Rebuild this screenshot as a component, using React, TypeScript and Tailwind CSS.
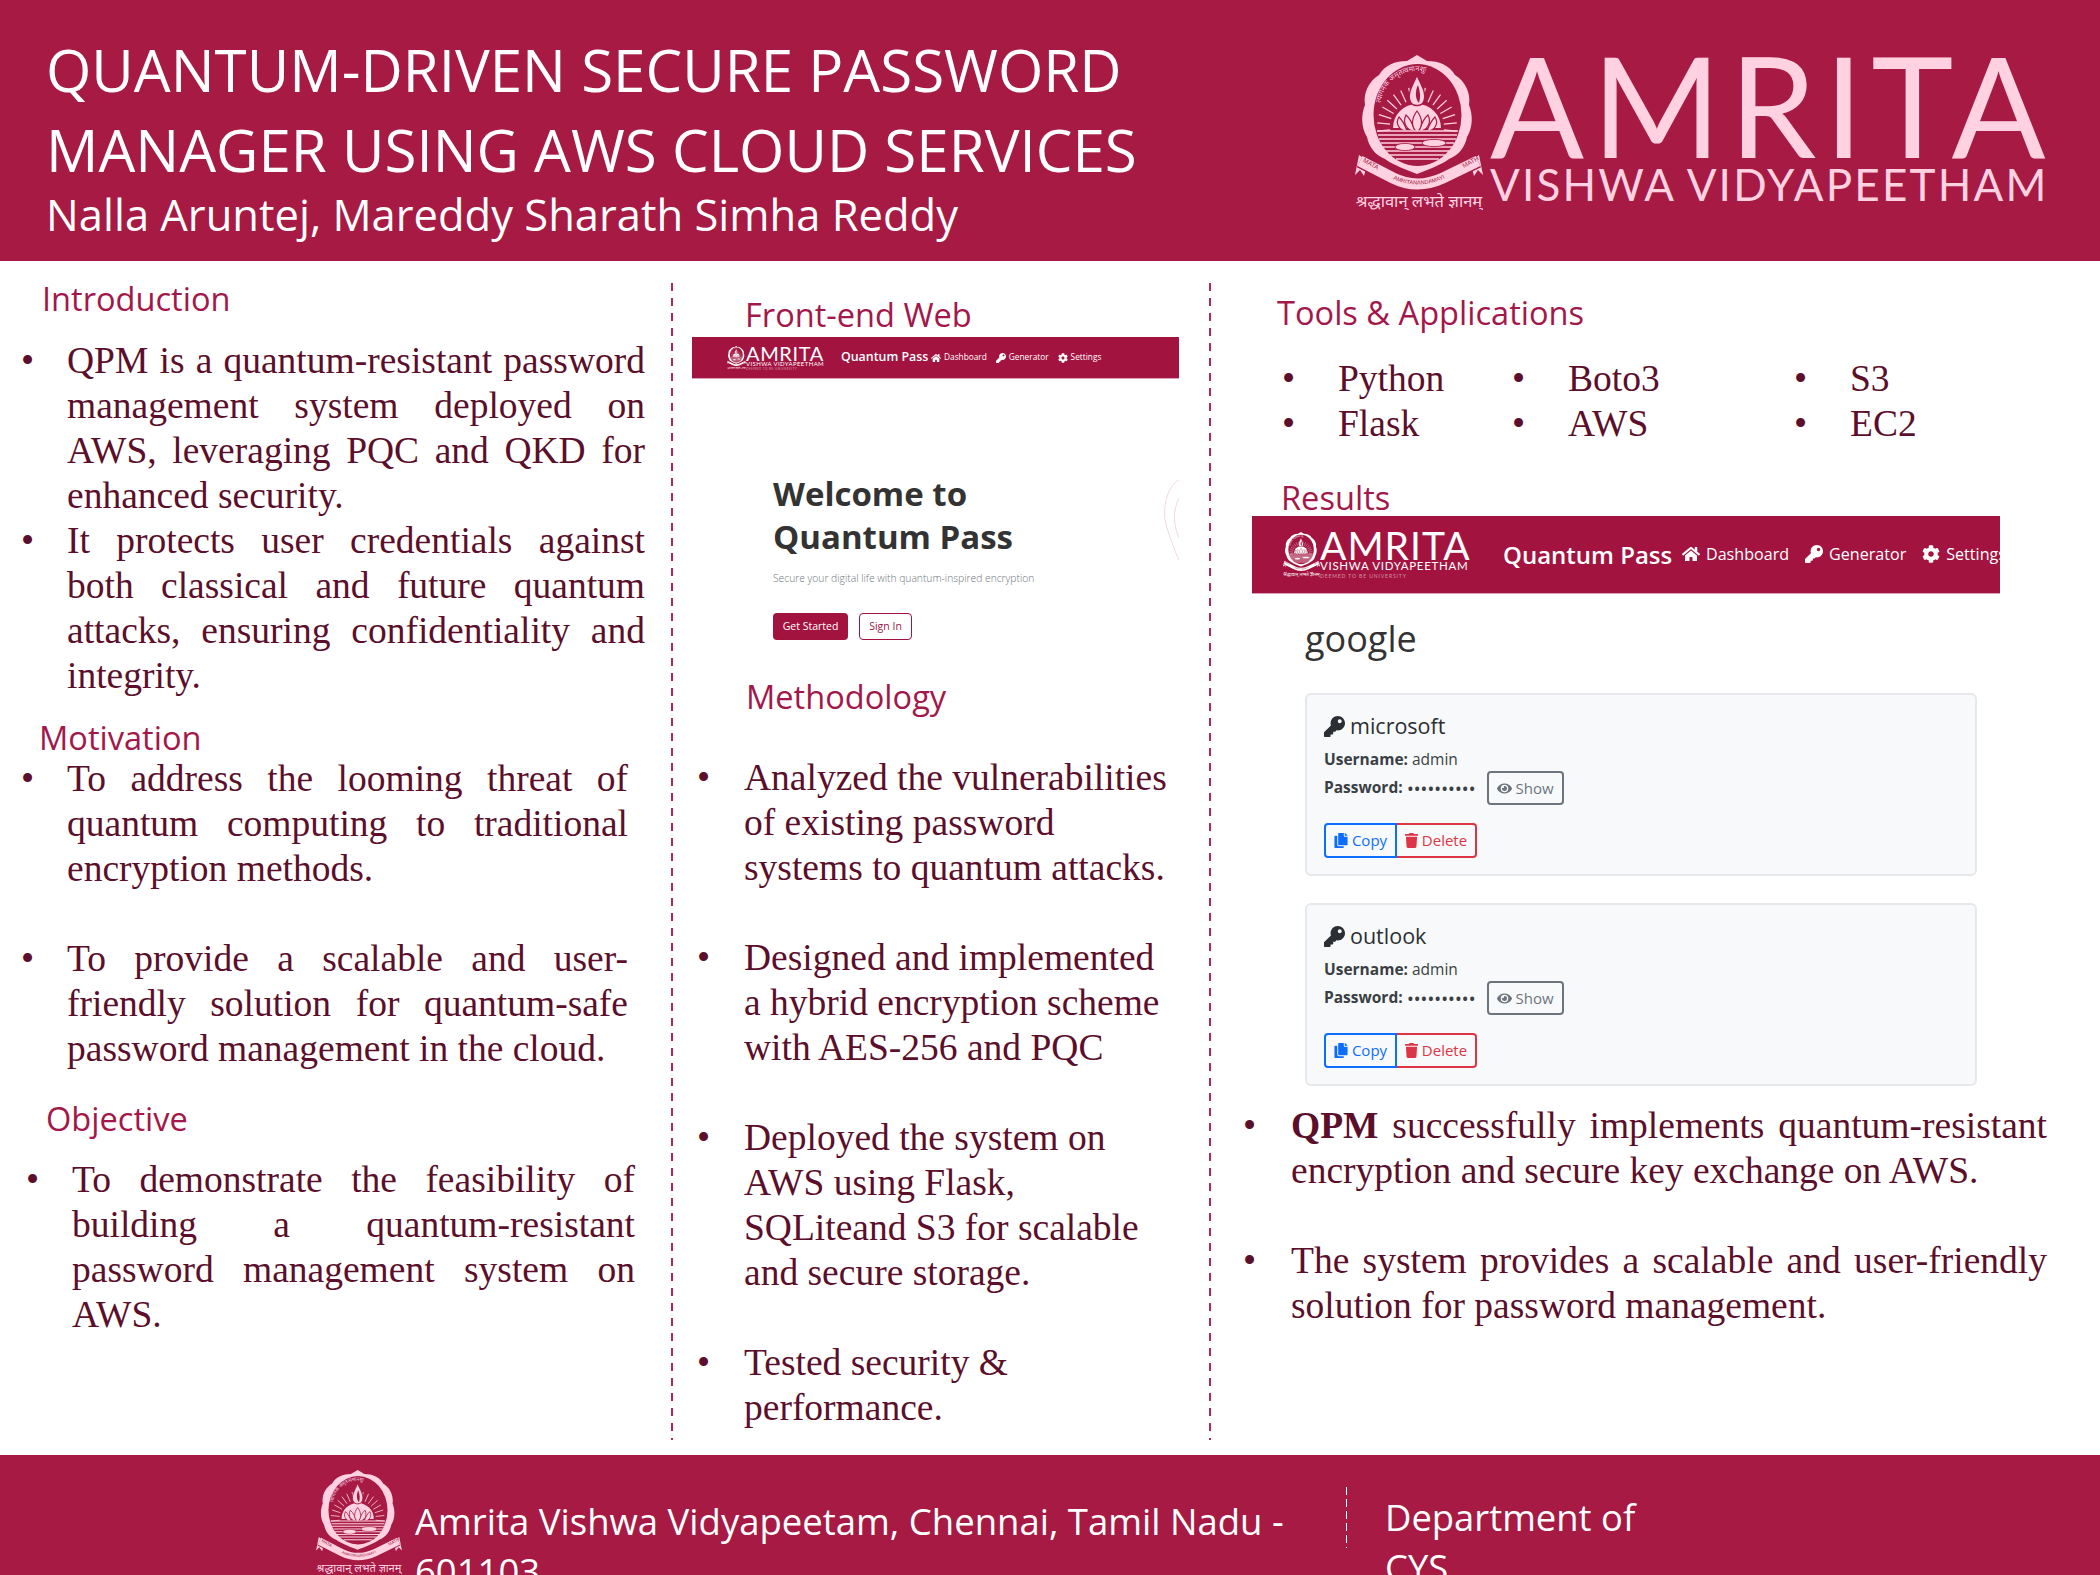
import React from "react";
import { FaHome, FaKey, FaCog, FaEye, FaCopy, FaTrash } from "react-icons/fa";

const sans = "font-['Open_Sans','Noto_Sans',sans-serif]";

function Emblem({ color = "#FFD1E1", bg = "#A61A44", className = "" }: { color?: string; bg?: string; className?: string }) {
  const rays = [-72, -60, -48, -36, -24, -12, 12, 24, 36, 48, 60, 72, -84, 84, -96, 96];
  return (
    <svg viewBox="0 0 128 155" className={className}>
      <path
        fill={color}
        d="M62 0 L72 6 C84 6 94 10 100 20 C110 26 116 38 114 50 C118 60 118 72 112 82 C110 92 104 100 94 104 C86 110 74 114 62 119 C50 114 38 110 30 104 C20 100 14 92 12 82 C6 72 6 60 10 50 C8 38 14 26 24 20 C30 10 40 6 52 6 Z"
      />
      <ellipse cx="62.5" cy="60" rx="44" ry="51" fill={bg} />
      <path id="mottoArc" d="M25 54 C26 32 42 16 62 16 C82 16 99 32 100 54" fill="none" />
      <text fontSize="7.4" fill={color} fontFamily="'Noto Sans','Noto Sans Devanagari',sans-serif">
        <textPath href="#mottoArc" startOffset="6">त्यागेनैके अमृतत्वमानशुः</textPath>
      </text>
      {rays.map((a) => {
        const r = (a * Math.PI) / 180;
        return (
          <line
            key={a}
            x1={62 + 27 * Math.sin(r)}
            y1={72 - 27 * Math.cos(r)}
            x2={62 + 40 * Math.sin(r)}
            y2={72 - 40 * Math.cos(r)}
            stroke={color}
            strokeWidth="1.2"
          />
        );
      })}
      <path d="M38 73 A24 24 0 0 1 86 73 Z" fill={color} />
      <path d="M62 20 C58 30 52 38 55 46 C57 52 67 52 69 46 C72 38 66 30 62 20 Z" fill={color} stroke={bg} strokeWidth="1.4" />
      <path d="M63 30 C60 36 60 44 64 48 C66 42 65 36 63 30 Z" fill={bg} />
      <g fill={color} stroke={bg} strokeWidth="1.2">
        <path d="M44 62 C40 68 44 76 52 76 C50 70 48 66 44 62 Z" />
        <path d="M80 62 C84 68 80 76 72 76 C74 70 76 66 80 62 Z" />
        <path d="M51 60 C47 68 52 76 60 76 C58 70 56 64 51 60 Z" />
        <path d="M73 60 C77 68 72 76 64 76 C66 70 68 64 73 60 Z" />
        <path d="M62 56 C56 64 56 72 62 77 C68 72 68 64 62 56 Z" />
      </g>
      <g stroke={color} strokeWidth="1.5">
        <line x1="22" y1="76" x2="103" y2="76" />
        <line x1="23" y1="80" x2="102" y2="80" />
        <line x1="24" y1="84" x2="101" y2="84" />
        <line x1="26" y1="88" x2="99" y2="88" />
        <line x1="28" y1="92" x2="97" y2="92" />
        <line x1="31" y1="96" x2="94" y2="96" />
        <line x1="35" y1="100" x2="90" y2="100" />
        <line x1="41" y1="104" x2="84" y2="104" />
      </g>
      <ellipse cx="50" cy="92" rx="10" ry="3.6" fill={color} stroke={bg} strokeWidth="0.8" />
      <ellipse cx="79" cy="88" rx="12" ry="3.6" fill={color} stroke={bg} strokeWidth="0.8" />
      <path d="M4 100 L0 120 L5 115 L9 121 L13 106 Z" fill={color} />
      <path d="M124 100 L128 120 L123 115 L119 121 L115 106 Z" fill={color} />
      <path d="M5 106 L38 123 Q62 135 88 123 L123 106" fill="none" stroke={bg} strokeWidth="14" />
      <path d="M5 106 L38 123 Q62 135 88 123 L123 106" fill="none" stroke={color} strokeWidth="11" />
      <path id="ribbonText" d="M5 105 L38 124 Q62 135 88 124 L124 105" fill="none" />
      <text fontSize="6.4" fill={bg} fontFamily="'Liberation Sans',sans-serif">
        <textPath href="#ribbonText" startOffset="3">MATA</textPath>
      </text>
      <text fontSize="5.6" fill={bg} fontFamily="'Liberation Sans',sans-serif">
        <textPath href="#ribbonText" startOffset="38">AMRITANANDAMAYI</textPath>
      </text>
      <text fontSize="6.4" fill={bg} fontFamily="'Liberation Sans',sans-serif">
        <textPath href="#ribbonText" startOffset="113">MATH</textPath>
      </text>
      <text x="64" y="152" fontSize="16.5" textAnchor="middle" fill={color} fontFamily="'Noto Sans','Noto Sans Devanagari',sans-serif">
        श्रद्धावान् लभते ज्ञानम्
      </text>
    </svg>
  );
}

const navStyles = {
  big: {
    bar: "h-[78px] w-[748px] pl-[31px]",
    emblem: "w-[37px] h-[45px]",
    logoWrap: "w-[186px] h-[48px]",
    name: "text-[39px] leading-[30px] tracking-[1px] pt-[1px]",
    sub: "text-[11.5px] leading-[11px] tracking-[0.7px]",
    deemed: "text-[5px] leading-[7px] mt-[2px] tracking-[0.9px]",
    brand: "ml-[34px] text-[24px] w-[179px]",
    links: "gap-[16px]",
    link: "text-[16.1px] gap-[6px]",
    icon: "w-[18px] h-[18px]",
  },
  small: {
    bar: "h-[42px] w-[487px] pl-[35px]",
    emblem: "w-[19px] h-[23px]",
    logoWrap: "w-[96px] h-[26px]",
    name: "text-[20px] leading-[16px] tracking-[0.6px]",
    sub: "text-[6px] leading-[6px] tracking-[0.4px]",
    deemed: "text-[3px] leading-[4px] tracking-[0.5px]",
    brand: "ml-[18px] text-[12.4px] w-[90px]",
    links: "gap-[9px]",
    link: "text-[8.3px] gap-[3px]",
    icon: "w-[10px] h-[10px]",
  },
};

function Navbar({ size }: { size: "big" | "small" }) {
  const s = navStyles[size];
  return (
    <div className={`flex items-center overflow-hidden whitespace-nowrap bg-[#A3133F] text-white border-b border-[#d9a3b6] ${sans} ${s.bar}`}>
      <div className={`flex shrink-0 items-center ${s.logoWrap}`}>
        <Emblem color="#ffffff" bg="#A3133F" className={`shrink-0 ${s.emblem}`} />
        <div className="font-['Lato',sans-serif]">
          <div className={s.name}>AMRITA</div>
          <div className={s.sub}>VISHWA VIDYAPEETHAM</div>
          <div className={`opacity-50 ${s.deemed}`}>DEEMED TO BE UNIVERSITY</div>
        </div>
      </div>
      <div className={`shrink-0 font-semibold ${s.brand}`}>Quantum Pass</div>
      <div className={`flex items-center ${s.links}`}>
        <span className={`flex items-center ${s.link}`}><FaHome className={s.icon} />Dashboard</span>
        <span className={`flex items-center ${s.link}`}><FaKey className={s.icon} />Generator</span>
        <span className={`flex items-center ${s.link}`}><FaCog className={s.icon} />Settings</span>
      </div>
    </div>
  );
}

function Heading({ className = "", children }: { className?: string; children: React.ReactNode }) {
  return <h2 className={`text-[32.6px] leading-[40px] text-[#A3184A] ${sans} ${className}`}>{children}</h2>;
}

function Bullets({
  items,
  className = "",
  bullet = "w-[45px]",
  justify = false,
  spaced = true,
}: {
  items: React.ReactNode[];
  className?: string;
  bullet?: string;
  justify?: boolean;
  spaced?: boolean;
}) {
  return (
    <ul className={`font-['Liberation_Serif',serif] text-[37.5px] leading-[45px] text-[#5B0F2B] ${className}`}>
      {items.map((item, i) => (
        <li key={i} className={`flex ${spaced ? "mb-[45px] last:mb-0" : ""}`}>
          <span className={`shrink-0 ${bullet}`}>•</span>
          <span className={justify ? "text-justify" : ""}>{item}</span>
        </li>
      ))}
    </ul>
  );
}

function CredentialCard({ name }: { name: string }) {
  return (
    <div className={`w-[672px] h-[183px] rounded-[6px] border-2 border-[#e6e8eb] bg-[#f8f9fa] pl-[17px] pt-[18px] text-[#3a3f44] ${sans}`}>
      <div className="flex items-center gap-[5px] text-[21.5px] leading-[26px] font-medium text-[#2b2f33]">
        <FaKey className="w-[21px] h-[21px]" />
        {name}
      </div>
      <div className="mt-[10px] text-[15.5px] leading-[20px]">
        <b className="font-bold">Username:</b> admin
      </div>
      <div className="mt-[2px] flex h-[34px] items-center text-[15.5px]">
        <b className="font-bold">Password:</b>
        <span className="ml-[5px] w-[74px] font-bold tracking-[1.6px] whitespace-nowrap text-[14px]">••••••••••</span>
        <span className="ml-[5px] flex h-[34px] w-[77px] shrink-0 items-center justify-center gap-[4px] rounded-[4px] border-2 border-[#6c757d] text-[15px] text-[#6c757d]">
          <FaEye className="w-[15px] h-[15px]" />
          Show
        </span>
      </div>
      <div className="mt-[18px] flex h-[35px] text-[15px]">
        <span className="flex w-[73px] items-center justify-center gap-[4px] rounded-l-[4px] border-2 border-[#0d6efd] text-[#0d6efd]">
          <FaCopy className="w-[14px] h-[15px]" />
          Copy
        </span>
        <span className="flex w-[80px] items-center justify-center gap-[4px] rounded-r-[4px] border-2 border-l-0 border-[#dc3545] text-[#dc3545]">
          <FaTrash className="w-[13px] h-[15px]" />
          Delete
        </span>
      </div>
    </div>
  );
}

function Divider() {
  return (
    <div className="absolute left-0 top-[22px] bottom-[15px] w-[2px] bg-[repeating-linear-gradient(to_bottom,#b02a55_0,#b02a55_8px,transparent_8px,transparent_15px)]" />
  );
}

export default function App() {
  return (
    <div className="flex h-[1575px] w-[2100px] flex-col overflow-hidden bg-white">
      {/* Title banner */}
      <header className="flex h-[261px] shrink-0 bg-[#A61A44] text-white">
        <div className={`pl-[46px] pt-[30px] ${sans}`}>
          <h1 className="w-[1150px] text-[58.3px] leading-[80px]">
            QUANTUM-DRIVEN SECURE PASSWORD
            <br />
            MANAGER USING AWS CLOUD SERVICES
          </h1>
          <p className="mt-[-5px] text-[43.5px] leading-[60px]">Nalla Aruntej, Mareddy Sharath Simha Reddy</p>
        </div>
        <div className="ml-auto flex items-start gap-[7px] pr-[54px] pt-[55px] whitespace-nowrap text-[#FFD1E1] font-['Lato',sans-serif]">
          <Emblem className="h-[155px] w-[128px]" />
          <div className="w-[556px]">
            <div className="mt-[-8px] text-[139px] leading-[116px] tracking-[8px]">AMRITA</div>
            <div className="mt-[3px] text-[44px] leading-[36px] tracking-[2.2px]">VISHWA VIDYAPEETHAM</div>
          </div>
        </div>
      </header>

      <main className="grid h-[1194px] shrink-0 grid-cols-[671px_538px_891px]">
        <section>
          <Heading className="ml-[42px] mt-[18px]">Introduction</Heading>
          <Bullets
            justify
            spaced={false}
            className="ml-[21px] mt-[19px] w-[624px]"
            bullet="w-[46px]"
            items={[
              "QPM is a quantum-resistant password management system deployed on AWS, leveraging PQC and QKD for enhanced security.",
              "It protects user credentials against both classical and future quantum attacks, ensuring confidentiality and integrity.",
            ]}
          />
          <Heading className="ml-[39px] mt-[20px]">Motivation</Heading>
          <Bullets
            justify
            className="ml-[21px] mt-[-2px] w-[607px]"
            bullet="w-[46px]"
            items={[
              "To address the looming threat of quantum computing to traditional encryption methods.",
              "To provide a scalable and user-friendly solution for quantum-safe password management in the cloud.",
            ]}
          />
          <Heading className="ml-[46px] mt-[28px]">Objective</Heading>
          <Bullets
            justify
            className="ml-[26px] mt-[18px] w-[609px]"
            bullet="w-[46px]"
            items={["To demonstrate the feasibility of building a quantum-resistant password management system on AWS."]}
          />
        </section>

        <section className="relative">
          <Divider />
          <Heading className="ml-[74px] mt-[34px]">Front-end Web</Heading>
          <div className="relative ml-[21px] mt-[2px] w-[487px]">
            <Navbar size="small" />
            <div className={`h-[261px] pl-[81px] pt-[93px] text-[#333333] ${sans}`}>
              <h3 className="text-[33px] leading-[43px] font-bold">
                Welcome to
                <br />
                Quantum Pass
              </h3>
              <p className="mt-[12px] text-[10.3px] leading-[16px] font-light text-[#6c757d]">Secure your digital life with quantum-inspired encryption</p>
              <div className="mt-[27px] flex gap-[11px] text-[10.5px]">
                <span className="flex h-[27px] w-[75px] items-center justify-center rounded-[4px] bg-[#A3133F] text-white">Get Started</span>
                <span className="flex h-[27px] w-[53px] items-center justify-center rounded-[4px] border border-[#A3133F] text-[#A3133F]">Sign In</span>
              </div>
            </div>
            <svg viewBox="0 0 16 80" className="absolute right-0 top-[143px] h-[80px] w-[16px]" fill="none" stroke="#f0d8e0">
              <path d="M16 0 C4 6 -2 30 4 48 C8 60 12 72 16 80" />
              <path d="M16 18 C10 30 10 44 16 58" />
            </svg>
          </div>
          <Heading className="ml-[75px] mt-[37px]">Methodology</Heading>
          <Bullets
            className="ml-[26px] mt-[38px] w-[500px]"
            bullet="w-[47px]"
            items={[
              <>Analyzed the vulnerabilities<br />of existing password<br />systems to quantum attacks.</>,
              <>Designed and implemented<br />a hybrid encryption scheme<br />with AES-256 and PQC</>,
              <>Deployed the system on<br />AWS using Flask,<br />SQLiteand S3 for scalable<br />and secure storage.</>,
              <>Tested security &amp;<br />performance.</>,
            ]}
          />
        </section>

        <section className="relative">
          <Divider />
          <Heading className="ml-[68px] mt-[32px]">Tools &amp; Applications</Heading>
          <div className="ml-[73px] mt-[23px] grid grid-cols-[230px_282px_1fr] font-['Liberation_Serif',serif] text-[37.5px] leading-[45px] text-[#5B0F2B]">
            {["Python", "Boto3", "S3", "Flask", "AWS", "EC2"].map((tool) => (
              <div key={tool} className="flex">
                <span className="w-[56px]">•</span>
                {tool}
              </div>
            ))}
          </div>
          <Heading className="ml-[72px] mt-[32px]">Results</Heading>
          <div className="ml-[43px] mt-[-2px]">
            <Navbar size="big" />
          </div>
          <div className={`ml-[96px] mt-[23px] text-[36px] leading-[44px] font-medium text-[#333333] ${sans}`}>google</div>
          <div className="ml-[96px] mt-[32px] flex flex-col gap-[27px]">
            <CredentialCard name="microsoft" />
            <CredentialCard name="outlook" />
          </div>
          <Bullets
            justify
            className="ml-[34px] mt-[17px] w-[804px]"
            bullet="w-[48px]"
            items={[
              <><b>QPM</b> successfully implements quantum-resistant encryption and secure key exchange on AWS.</>,
              "The system provides a scalable and user-friendly solution for password management.",
            ]}
          />
        </section>
      </main>

      {/* Footer banner, text runs past the page edge */}
      <footer className={`flex h-[120px] shrink-0 overflow-hidden bg-[#A61A44] text-white ${sans}`}>
        <Emblem className="ml-[316px] mt-[15px] h-[104px] w-[86px] shrink-0" />
        <div className="ml-[13px] mt-[41px] w-[905px] shrink-0 text-[36.5px] leading-[50px]">Amrita Vishwa Vidyapeetam, Chennai, Tamil Nadu - 601103</div>
        <div className="ml-[26px] mt-[32px] h-[61px] w-[1px] shrink-0 bg-[repeating-linear-gradient(to_bottom,#ffffff_0,#ffffff_8px,transparent_8px,transparent_12px)]" />
        <div className="ml-[38px] mt-[37px] w-[270px] text-[36.4px] leading-[50px]">Department of CYS</div>
      </footer>
    </div>
  );
}
